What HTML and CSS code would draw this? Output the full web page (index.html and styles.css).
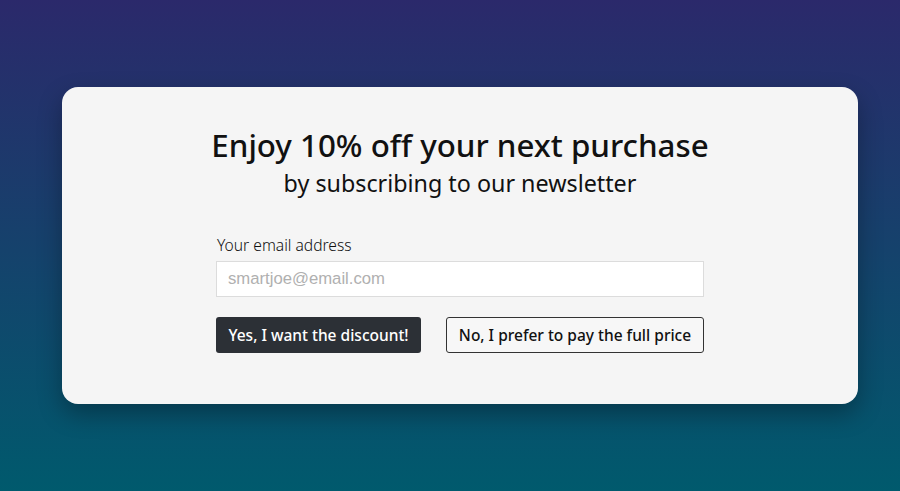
FILE: index.html
```html
<!DOCTYPE html>
<html lang="en">
<head>
<meta charset="utf-8">
<title>Newsletter</title>
<link rel="stylesheet" href="styles.css">
</head>
<body>
<main class="page">
  <section class="card">
    <h1 class="title">Enjoy 10% off your next purchase</h1>
    <p class="subtitle">by subscribing to our newsletter</p>
    <form class="form">
      <label class="label" for="email">Your email address</label>
      <input class="input" id="email" type="email" placeholder="smartjoe@email.com">
      <div class="actions">
        <button type="button" class="btn btn-primary">Yes, I want the discount!</button>
        <button type="button" class="btn btn-secondary">No, I prefer to pay the full price</button>
      </div>
    </form>
  </section>
</main>
</body>
</html>
```
FILE: styles.css
```css
html, body {
  margin: 0;
  height: 100%;
}
body {
  background: linear-gradient(180deg, #2b296b 0%, #005a6d 100%);
  font-family: "Noto Sans", "Open Sans", sans-serif;
  color: #111;
}
.page {
  padding: 87px 42px 0 62px;
}
.card {
  box-sizing: border-box;
  width: 796px;
  height: 317px;
  background: #f5f5f5;
  border-radius: 16px;
  box-shadow: 0 10px 24px rgba(0, 0, 0, 0.3);
  display: flex;
  flex-direction: column;
  align-items: center;
  padding-top: 38px;
}
.title {
  margin: 0;
  font-size: 31.3px;
  font-weight: 500;
  line-height: 40px;
}
.subtitle {
  margin: 3px 0 0;
  font-size: 23.3px;
  font-weight: 400;
  line-height: 30px;
}
.form {
  width: 488px;
  margin-top: 37px;
  display: flex;
  flex-direction: column;
}
.label {
  font-size: 15.6px;
  font-weight: 300;
  line-height: 20px;
  padding-left: 1px;
  margin-bottom: 6px;
}
.input {
  box-sizing: border-box;
  height: 36px;
  border: 1px solid #dcdcdc;
  background: #fff;
  padding: 0 11px;
  font-family: "Liberation Sans", Arial, sans-serif;
  font-size: 16.7px;
  outline: none;
}
.input::placeholder {
  color: #b0b0b0;
}
.actions {
  display: flex;
  justify-content: space-between;
  margin-top: 20px;
}
.btn {
  box-sizing: border-box;
  height: 36px;
  font-family: "Noto Sans", sans-serif;
  font-size: 15.5px;
  font-weight: 500;
  border-radius: 3px;
  padding: 0 10px;
  cursor: pointer;
}
.btn-primary {
  width: 205px;
  background: #2c3036;
  color: #fff;
  border: none;
}
.btn-secondary {
  width: 258px;
  background: #f7f7f7;
  color: #111;
  border: 1px solid #333;
}
```
